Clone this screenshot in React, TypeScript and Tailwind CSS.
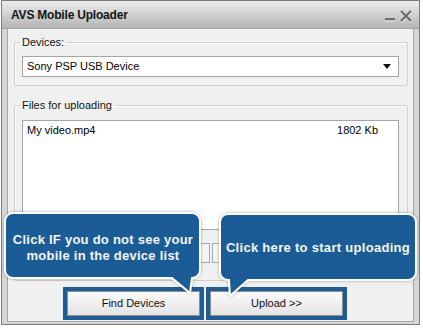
export default function App() {
  return (
    <div className="relative w-[423px] h-[330px] bg-white overflow-hidden font-['Liberation_Sans',Arial,sans-serif] text-[11px] text-black">
      <div className="ml-[1px] w-[419px] h-[325px] border border-[#7c7c7c] flex flex-col">
        <div className="h-[28px] bg-gradient-to-b from-[#ededed] to-[#b5b5b5] flex items-center justify-between pl-[9px] pr-[6px] border-b border-[#a3a3a3]">
          <span className="font-bold text-[12px] text-[#151515] tracking-[-0.2px]">AVS Mobile Uploader</span>
          <div className="flex items-center gap-[3px] pt-[2px]">
            <svg width="12" height="14" viewBox="0 0 12 14">
              <rect x="1" y="9" width="10" height="2.5" fill="#6e6e6e" />
              <rect x="1" y="11.5" width="10" height="1" fill="#e8e8e8" />
            </svg>
            <svg width="14" height="14" viewBox="0 0 14 14">
              <path d="M2 2 L12 12 M12 2 L2 12" stroke="#e6e6e6" strokeWidth="2.6" transform="translate(0.6,0.8)" />
              <path d="M2 2 L12 12 M12 2 L2 12" stroke="#6c6c6c" strokeWidth="2.2" />
            </svg>
          </div>
        </div>
        <div className="flex-1 bg-[#d6d6d6] px-[5px] pb-[2px]">
          <div className="h-full bg-[#f0f0f0] border-x border-b border-[#a6a6a6] flex flex-col pl-[6px] pr-[5px] pb-[1px]">
            <fieldset className="mt-[6px] border border-[#d0d0d0] shadow-[inset_1px_1px_0_#ffffff] pl-[7px] pr-[8px] pb-[8px] rounded-[2px]">
              <legend className="-ml-[2px] px-[2px] leading-[14px] text-[#111]">Devices:</legend>
              <div className="mt-[7px] h-[21px] bg-white border border-[#a5a5a5] flex items-center justify-between pl-[4px] pr-[7px]">
                <span>Sony PSP USB Device</span>
                <svg width="8" height="5" viewBox="0 0 8 5">
                  <path d="M0 0 H8 L4 5 Z" fill="#111" />
                </svg>
              </div>
            </fieldset>
            <fieldset className="mt-[12px] flex-1 border border-[#d0d0d0] shadow-[inset_1px_1px_0_#ffffff] pl-[7px] pr-[8px] rounded-[2px] flex flex-col">
              <legend className="-ml-[2px] px-[2px] leading-[14px] text-[#111]">Files for uploading</legend>
              <div className="mt-[8px] h-[110px] bg-white border border-[#a5a5a5] pl-[4px] pr-[20px] pt-[2px]">
                <div className="flex justify-between leading-[15px]">
                  <span>My video.mp4</span>
                  <span>1802 Kb</span>
                </div>
              </div>
              <div className="mt-[13px] flex justify-center gap-[2px]">
                <div className="w-[60px] h-[20px] border border-[#aaaaaa] bg-[#f4f4f4]" />
                <div className="w-[18px] h-[20px] border border-[#aaaaaa] bg-[#f4f4f4]" />
                <div className="w-[18px] h-[20px] border border-[#aaaaaa] bg-[#f4f4f4]" />
                <div className="w-[60px] h-[20px] border border-[#aaaaaa] bg-[#f4f4f4]" />
              </div>
            </fieldset>
            <div className="mt-[6px] flex gap-[2px] pl-[49px]">
              <div className="w-[141px] h-[33px] border-[4px] border-[#1f5c96]">
                <div className="h-full border border-[#8e8e8e] bg-gradient-to-b from-[#fbfbfb] to-[#e3e3e3] flex items-center justify-center text-[#111]">
                  Find Devices
                </div>
              </div>
              <div className="w-[141px] h-[33px] border-[4px] border-[#1f5c96]">
                <div className="h-full border border-[#8e8e8e] bg-gradient-to-b from-[#fbfbfb] to-[#e3e3e3] flex items-center justify-center text-[#111]">
                  Upload &gt;&gt;
                </div>
              </div>
            </div>
          </div>
        </div>
      </div>

      <svg className="absolute left-0 top-0" width="423" height="330" viewBox="0 0 423 330">
        <defs>
          <filter id="sh" x="-10%" y="-20%" width="120%" height="140%">
            <feDropShadow dx="0" dy="0" stdDeviation="1.5" floodColor="#000" floodOpacity="0.35" />
          </filter>
        </defs>
        <path
          d="M13,213 H192 A8,8 0 0 1 200,221 V270 A8,8 0 0 1 192,278 L190,293 L172,278 H13 A8,8 0 0 1 5,270 V221 A8,8 0 0 1 13,213 Z"
          fill="#1f5c96"
          stroke="#ffffff"
          strokeWidth="2"
          filter="url(#sh)"
        />
        <path
          d="M228,214 H408 A8,8 0 0 1 416,222 V272 A8,8 0 0 1 408,280 H248 L230,296 L229,280 H228 A8,8 0 0 1 220,272 V222 A8,8 0 0 1 228,214 Z"
          fill="#1f5c96"
          stroke="#ffffff"
          strokeWidth="2"
          filter="url(#sh)"
        />
      </svg>
      <div className="absolute left-[5px] top-[232px] w-[196px] text-center text-[13px] leading-[16px] font-bold tracking-[0.25px] text-[#f2f6fa]">
        Click IF you do not see your
        <br />
        mobile in the device list
      </div>
      <div className="absolute left-[220px] top-[240px] w-[196px] text-center text-[13px] leading-[16px] font-bold tracking-[0.3px] text-[#f2f6fa]">
        Click here to start uploading
      </div>
    </div>
  );
}
